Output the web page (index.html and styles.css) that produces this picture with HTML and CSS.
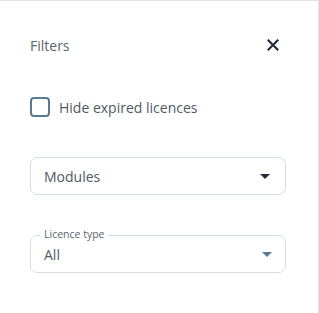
FILE: index.html
```html
<!DOCTYPE html>
<html lang="en">
    <head>
        <meta charset="UTF-8">
        <meta name="viewport" content="width=device-width, initial-scale=1.0">
        <title>Filters</title>
        <link rel="stylesheet" href="styles.css">
    </head>
    <body>
        <div class="painel">
            <div class="cabecalho">
                <span class="titulo">Filters</span>
                <button class="fechar" aria-label="Close">
                    <svg width="12" height="12" viewBox="0 0 12 12">
                        <path d="M1.5 1.5 L10.5 10.5 M10.5 1.5 L1.5 10.5" stroke="#252d38" stroke-width="2.2" stroke-linecap="square"/>
                    </svg>
                </button>
            </div>

            <label class="caixa">
                <span class="quadrado"></span>
                <span>Hide expired licences</span>
            </label>

            <div class="seletor">
                <span>Modules</span>
                <span class="seta escura"></span>
            </div>

            <div class="seletor contorno">
                <span class="rotulo">Licence type</span>
                <span>All</span>
                <span class="seta azul"></span>
            </div>
        </div>
    </body>
</html>
```

FILE: styles.css
```css
html, body {
    height: 100%;
}

body {
    margin: 0;
    padding: 0;
    background: #fff;
    font-family: 'Open Sans', 'Noto Sans', sans-serif;
}

.painel {
    box-sizing: border-box;
    width: 319px;
    height: 313px;
    border-top: 1px solid #e3e3e3;
    border-right: 1px solid #e3e3e3;
    padding: 0 32px 0 30px;
}

.cabecalho {
    display: flex;
    justify-content: space-between;
    align-items: center;
    height: 28px;
    margin-top: 30px;
}

.titulo {
    font-size: 14px;
    color: #5a646d;
}

.fechar {
    background: none;
    border: none;
    padding: 0;
    margin-right: 7px;
    display: flex;
    cursor: pointer;
}

.caixa {
    display: flex;
    align-items: center;
    gap: 9px;
    margin-top: 38px;
    font-size: 14px;
    color: #4f5963;
}

.quadrado {
    box-sizing: border-box;
    width: 20px;
    height: 20px;
    border: 2px solid #5a7a94;
    border-radius: 4px;
}

.seletor {
    box-sizing: border-box;
    display: flex;
    justify-content: space-between;
    align-items: center;
    width: 256px;
    height: 38px;
    margin-top: 40px;
    padding: 0 15px 0 13px;
    border: 1px solid #d4dee7;
    border-radius: 7px;
    font-size: 14px;
    color: #4f5963;
}

.contorno {
    position: relative;
    margin-top: 40px;
    padding-right: 13px;
}

.rotulo {
    position: absolute;
    left: 9px;
    top: -9px;
    padding: 0 4px;
    background: #fff;
    font-size: 10.5px;
    line-height: 15px;
    color: #5a646d;
}

.seta {
    width: 0;
    height: 0;
    border-left: 5px solid transparent;
    border-right: 5px solid transparent;
    border-top: 5px solid #252d38;
}

.seta.azul {
    border-top-color: #5a7a94;
}
```
